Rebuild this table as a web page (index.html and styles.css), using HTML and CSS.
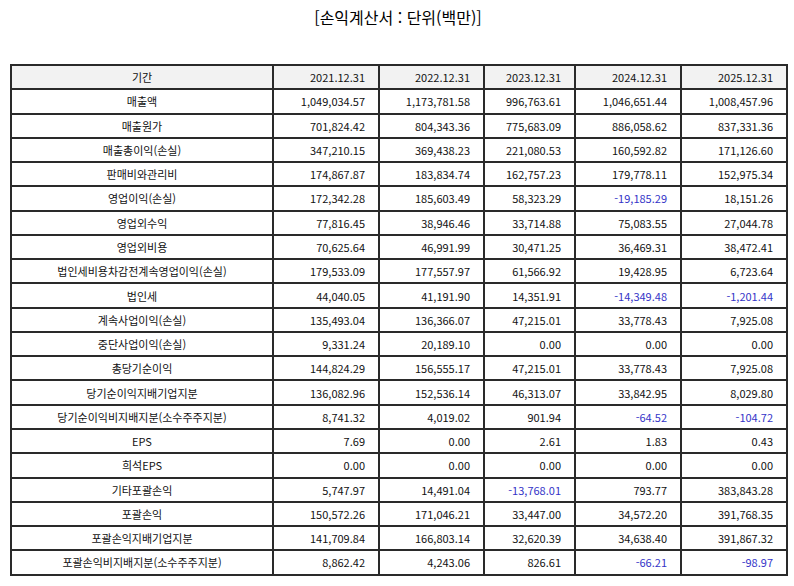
FILE: index.html
```html
<!DOCTYPE html>
<html lang="ko">
<head>
<meta charset="utf-8">
<title>손익계산서</title>
<link rel="stylesheet" href="styles.css">
</head>
<body>
<h1 class="title">[손익계산서 : 단위(백만)]</h1>
<table class="fin">
<colgroup>
<col class="c-label"><col class="c-a"><col class="c-b"><col class="c-c"><col class="c-d"><col class="c-e">
</colgroup>
<thead>
<tr><th class="label">기간</th><th>2021.12.31</th><th>2022.12.31</th><th>2023.12.31</th><th>2024.12.31</th><th>2025.12.31</th></tr>
</thead>
<tbody>
<tr><td class="label">매출액</td><td>1,049,034.57</td><td>1,173,781.58</td><td>996,763.61</td><td>1,046,651.44</td><td>1,008,457.96</td></tr>
<tr><td class="label">매출원가</td><td>701,824.42</td><td>804,343.36</td><td>775,683.09</td><td>886,058.62</td><td>837,331.36</td></tr>
<tr><td class="label">매출총이익(손실)</td><td>347,210.15</td><td>369,438.23</td><td>221,080.53</td><td>160,592.82</td><td>171,126.60</td></tr>
<tr><td class="label">판매비와관리비</td><td>174,867.87</td><td>183,834.74</td><td>162,757.23</td><td>179,778.11</td><td>152,975.34</td></tr>
<tr><td class="label">영업이익(손실)</td><td>172,342.28</td><td>185,603.49</td><td>58,323.29</td><td class="neg">-19,185.29</td><td>18,151.26</td></tr>
<tr><td class="label">영업외수익</td><td>77,816.45</td><td>38,946.46</td><td>33,714.88</td><td>75,083.55</td><td>27,044.78</td></tr>
<tr><td class="label">영업외비용</td><td>70,625.64</td><td>46,991.99</td><td>30,471.25</td><td>36,469.31</td><td>38,472.41</td></tr>
<tr><td class="label">법인세비용차감전계속영업이익(손실)</td><td>179,533.09</td><td>177,557.97</td><td>61,566.92</td><td>19,428.95</td><td>6,723.64</td></tr>
<tr><td class="label">법인세</td><td>44,040.05</td><td>41,191.90</td><td>14,351.91</td><td class="neg">-14,349.48</td><td class="neg">-1,201.44</td></tr>
<tr><td class="label">계속사업이익(손실)</td><td>135,493.04</td><td>136,366.07</td><td>47,215.01</td><td>33,778.43</td><td>7,925.08</td></tr>
<tr><td class="label">중단사업이익(손실)</td><td>9,331.24</td><td>20,189.10</td><td>0.00</td><td>0.00</td><td>0.00</td></tr>
<tr><td class="label">총당기순이익</td><td>144,824.29</td><td>156,555.17</td><td>47,215.01</td><td>33,778.43</td><td>7,925.08</td></tr>
<tr><td class="label">당기순이익지배기업지분</td><td>136,082.96</td><td>152,536.14</td><td>46,313.07</td><td>33,842.95</td><td>8,029.80</td></tr>
<tr><td class="label">당기순이익비지배지분(소수주주지분)</td><td>8,741.32</td><td>4,019.02</td><td>901.94</td><td class="neg">-64.52</td><td class="neg">-104.72</td></tr>
<tr><td class="label">EPS</td><td>7.69</td><td>0.00</td><td>2.61</td><td>1.83</td><td>0.43</td></tr>
<tr><td class="label">희석EPS</td><td>0.00</td><td>0.00</td><td>0.00</td><td>0.00</td><td>0.00</td></tr>
<tr><td class="label">기타포괄손익</td><td>5,747.97</td><td>14,491.04</td><td class="neg">-13,768.01</td><td>793.77</td><td>383,843.28</td></tr>
<tr><td class="label">포괄손익</td><td>150,572.26</td><td>171,046.21</td><td>33,447.00</td><td>34,572.20</td><td>391,768.35</td></tr>
<tr><td class="label">포괄손익지배기업지분</td><td>141,709.84</td><td>166,803.14</td><td>32,620.39</td><td>34,638.40</td><td>391,867.32</td></tr>
<tr><td class="label">포괄손익비지배지분(소수주주지분)</td><td>8,862.42</td><td>4,243.06</td><td>826.61</td><td class="neg">-66.21</td><td class="neg">-98.97</td></tr>
</tbody>
</table>
</body>
</html>
```
FILE: styles.css
```css
html, body {
  margin: 0;
  padding: 0;
  background: #fff;
}
body {
  padding: 0 8px 0 10px;
  font-family: "Noto Sans CJK KR", "Noto Sans", sans-serif;
  color: #111;
}
.title {
  margin: 0;
  padding-top: 6px;
  height: 64px;
  box-sizing: border-box;
  font-size: 16px;
  font-weight: 400;
  line-height: 22px;
  text-align: center;
  color: #000;
}
.fin {
  width: 776px;
  border-collapse: collapse;
  table-layout: fixed;
  font-size: 11px;
}
.fin tr {
  height: 24.27px;
}
.c-label { width: 262px; }
.c-a { width: 106px; }
.c-b { width: 105px; }
.c-c { width: 91px; }
.c-d { width: 106px; }
.c-e { width: 106px; }
.fin th, .fin td {
  border: 2px solid #2a2a2a;
  padding: 0 13px 0 4px;
  text-align: right;
  font-weight: 400;
  line-height: 14px;
  white-space: nowrap;
}
.fin th {
  background: #f2f2f2;
}
.fin .label {
  text-align: center;
  padding: 0 4px;
}
.fin .neg {
  color: #3434c8;
}
```
